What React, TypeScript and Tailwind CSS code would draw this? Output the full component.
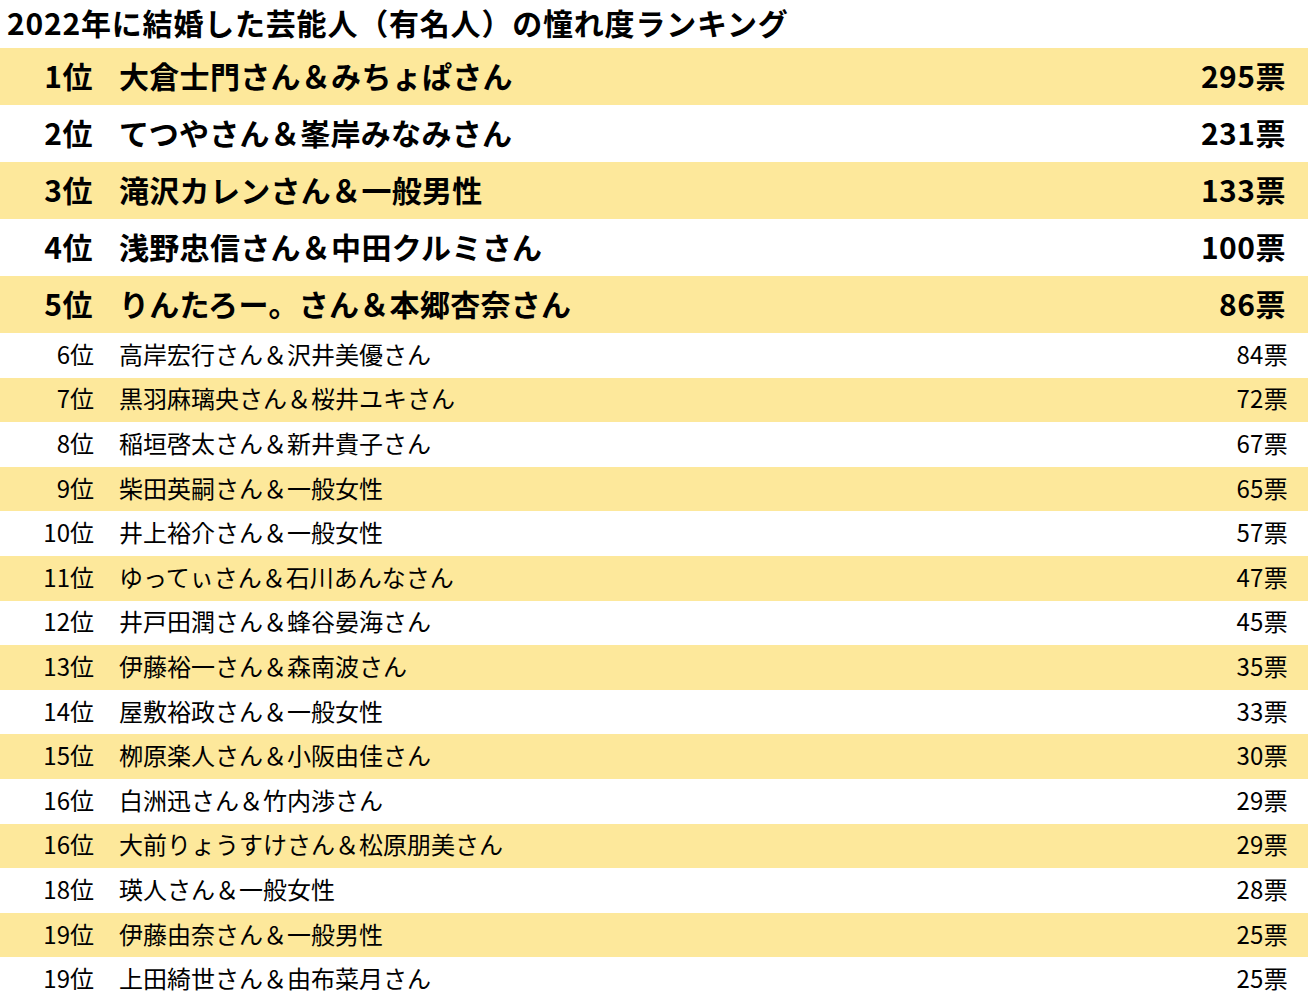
const big: [string, string, string][] = [
  ["1位", "大倉士門さん＆みちょぱさん", "295票"],
  ["2位", "てつやさん＆峯岸みなみさん", "231票"],
  ["3位", "滝沢カレンさん＆一般男性", "133票"],
  ["4位", "浅野忠信さん＆中田クルミさん", "100票"],
  ["5位", "りんたろー。さん＆本郷杏奈さん", "86票"],
];
const small: [string, string, string][] = [
  ["6位", "高岸宏行さん＆沢井美優さん", "84票"],
  ["7位", "黒羽麻璃央さん＆桜井ユキさん", "72票"],
  ["8位", "稲垣啓太さん＆新井貴子さん", "67票"],
  ["9位", "柴田英嗣さん＆一般女性", "65票"],
  ["10位", "井上裕介さん＆一般女性", "57票"],
  ["11位", "ゆってぃさん＆石川あんなさん", "47票"],
  ["12位", "井戸田潤さん＆蜂谷晏海さん", "45票"],
  ["13位", "伊藤裕一さん＆森南波さん", "35票"],
  ["14位", "屋敷裕政さん＆一般女性", "33票"],
  ["15位", "栁原楽人さん＆小阪由佳さん", "30票"],
  ["16位", "白洲迅さん＆竹内渉さん", "29票"],
  ["16位", "大前りょうすけさん＆松原朋美さん", "29票"],
  ["18位", "瑛人さん＆一般女性", "28票"],
  ["19位", "伊藤由奈さん＆一般男性", "25票"],
  ["19位", "上田綺世さん＆由布菜月さん", "25票"],
];

export default function App() {
  return (
    <div
      className="w-[1310px] h-[1003px] bg-white text-black overflow-hidden"
      style={{ fontFamily: '"Noto Sans CJK JP", "Noto Sans", sans-serif' }}
    >
      <div className="h-[48px] flex items-start pl-[7px] text-[30px] font-bold tracking-[0.8px] leading-[44px]">
        2022年に結婚した芸能人（有名人）の憧れ度ランキング
      </div>
      <div className="w-[1308px]">
        {big.map((r, i) => (
          <div
            key={i}
            className={`h-[57px] flex items-center pb-[4px] font-bold text-[30px] leading-[44px] ${i % 2 === 0 ? "bg-[#fde89b]" : "bg-white"}`}
          >
            <div className="w-[93px] text-right tracking-[0.5px]">{r[0]}</div>
            <div className="flex-1 pl-[26px] tracking-[0.3px]">{r[1]}</div>
            <div className="pr-[22px] text-right tracking-[0.5px]">{r[2]}</div>
          </div>
        ))}
        {small.map((r, i) => (
          <div
            key={i}
            className={`h-[44.6px] flex items-center pb-[3px] text-[24px] leading-[36px] ${i % 2 === 1 ? "bg-[#fde89b]" : "bg-white"}`}
          >
            <div className="w-[94px] text-right">{r[0]}</div>
            <div className="flex-1 pl-[25px]">{r[1]}</div>
            <div className="pr-[20px] text-right tracking-[0.3px]">{r[2]}</div>
          </div>
        ))}
      </div>
    </div>
  );
}
